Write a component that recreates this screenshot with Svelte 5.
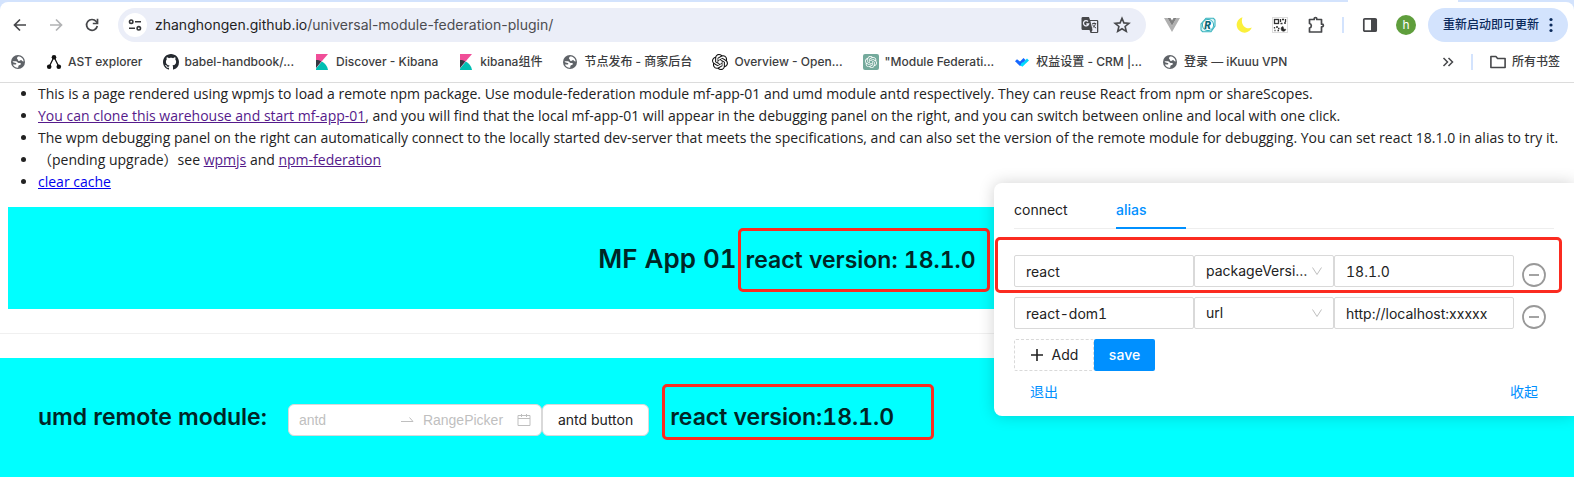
<script>
  const bookmarks = [
    { icon: 'globe', label: '' },
    { icon: 'ast', label: 'AST explorer' },
    { icon: 'github', label: 'babel-handbook/...' },
    { icon: 'kibana', label: 'Discover - Kibana' },
    { icon: 'kibana', label: 'kibana组件' },
    { icon: 'globe', label: '节点发布 - 商家后台' },
    { icon: 'openai', label: 'Overview - Open...' },
    { icon: 'chatgpt', label: '"Module Federati...' },
    { icon: 'check', label: '权益设置 - CRM |...' },
    { icon: 'globe', label: '登录 — iKuuu VPN' }
  ];

  const knot =
    'M22.2819 9.8211a5.9847 5.9847 0 0 0-.5157-4.9108 6.0462 6.0462 0 0 0-6.5098-2.9A6.0651 6.0651 0 0 0 4.9807 4.1818a5.9847 5.9847 0 0 0-3.9977 2.9 6.0462 6.0462 0 0 0 .7427 7.0966 5.98 5.98 0 0 0 .511 4.9107 6.051 6.051 0 0 0 6.5146 2.9001A5.9847 5.9847 0 0 0 13.2599 24a6.0557 6.0557 0 0 0 5.7718-4.2058 5.9894 5.9894 0 0 0 3.9977-2.9001 6.0557 6.0557 0 0 0-.7475-7.0729zm-9.022 12.6081a4.4755 4.4755 0 0 1-2.8764-1.0408l.1419-.0804 4.7783-2.7582a.7948.7948 0 0 0 .3927-.6813v-6.7369l2.02 1.1686a.071.071 0 0 1 .038.052v5.5826a4.504 4.504 0 0 1-4.4945 4.4944zm-9.6607-4.1254a4.4708 4.4708 0 0 1-.5346-3.0137l.142.0852 4.783 2.7582a.7712.7712 0 0 0 .7806 0l5.8428-3.3685v2.3324a.0804.0804 0 0 1-.0332.0615L9.74 19.9502a4.4992 4.4992 0 0 1-6.1408-1.6464zM2.3408 7.8956a4.485 4.485 0 0 1 2.3655-1.9728V11.6a.7664.7664 0 0 0 .3879.6765l5.8144 3.3543-2.0201 1.1685a.0757.0757 0 0 1-.071 0l-4.8303-2.7865A4.504 4.504 0 0 1 2.3408 7.872zm16.5963 3.8558L13.1038 8.364 15.1192 7.2a.0757.0757 0 0 1 .071 0l4.8303 2.7913a4.4944 4.4944 0 0 1-.6765 8.1042v-5.6772a.79.79 0 0 0-.407-.667zm2.0107-3.0231l-.142-.0852-4.7735-2.7818a.7759.7759 0 0 0-.7854 0L9.409 9.2297V6.8974a.0662.0662 0 0 1 .0284-.0615l4.8303-2.7866a4.4992 4.4992 0 0 1 6.6802 4.66zM8.3065 12.863l-2.02-1.1638a.0804.0804 0 0 1-.038-.0567V6.0742a4.4992 4.4992 0 0 1 7.3757-3.4537l-.142.0805L8.704 5.459a.7948.7948 0 0 0-.3927.6813zm1.0976-2.3654l2.602-1.4998 2.6069 1.4998v2.9994l-2.5974 1.4997-2.6067-1.4997Z';

  let rows = $state([
    { name: 'react', kind: 'packageVersion', value: '18.1.0' },
    { name: 'react-dom1', kind: 'url', value: 'http://localhost:xxxxx' }
  ]);

  function addRow() {
    rows.push({ name: '', kind: 'url', value: '' });
  }
  function removeRow(i) {
    rows.splice(i, 1);
  }
</script>

{#snippet siteIcon(name)}
  {#if name === 'globe'}
    <svg width="16" height="16" viewBox="0 0 16 16">
      <circle cx="8" cy="8" r="7" fill="#5f6368" />
      <path d="M2.6 7.2h3.2c1.5 0 1.6 1.7 3 1.7h1.400c.9 0 .9 1.900-.4 2.100-1.300.1-1.500 1.100-1.600 2.700-2.600.2-4.600-1.300-5.300-3.200h2.800c.9 0 .8-1.200 0-1.500C4.500 8.600 2.700 8.700 2.600 7.200z" fill="#fff" />
      <path d="M8 2.400c-.9 1-1.500 2-.6 2.700.7.6.4 1.800 1.500 1.900 1.300.1 1.200-.9 2.100-1 .9 0 .8 1.500 2.700 1.500C13.400 4.300 11 2.300 8 2.400z" fill="#fff" />
    </svg>
  {:else if name === 'ast'}
    <svg width="16" height="16" viewBox="0 0 16 16">
      <path d="M8 3 3 13M8 3l5 10" stroke="#111" stroke-width="1.300" />
      <circle cx="8" cy="3.200" r="2.300" fill="#111" /><circle cx="3.200" cy="12.800" r="2.300" fill="#111" /><circle cx="12.800" cy="12.800" r="2.300" fill="#111" />
    </svg>
  {:else if name === 'github'}
    <svg width="16" height="16" viewBox="0 0 16 16">
      <path fill="#24292f" d="M8 0C3.58 0 0 3.58 0 8c0 3.54 2.29 6.53 5.47 7.59.4.07.55-.17.55-.38 0-.19-.01-.82-.01-1.49-2.01.37-2.53-.49-2.69-.94-.09-.23-.48-.94-.82-1.13-.28-.15-.68-.52-.01-.53.63-.01 1.08.58 1.23.82.72 1.21 1.87.87 2.33.66.07-.52.28-.87.51-1.07-1.78-.2-3.64-.89-3.64-3.95 0-.87.31-1.59.82-2.15-.08-.2-.36-1.02.08-2.12 0 0 .67-.21 2.2.82.64-.18 1.32-.27 2-.27s1.36.09 2 .27c1.53-1.04 2.2-.82 2.2-.82.44 1.1.16 1.92.08 2.12.51.56.82 1.27.82 2.15 0 3.07-1.87 3.75-3.65 3.95.29.25.54.73.54 1.48 0 1.07-.01 1.93-.01 2.2 0 .21.15.46.55.38A8.01 8.01 0 0 0 16 8c0-4.42-3.58-8-8-8z" />
    </svg>
  {:else if name === 'kibana'}
    <svg width="16" height="16" viewBox="0 0 16 16">
      <path d="M2 0h12L2 14z" fill="#f04e98" />
      <path d="M2 6c2 0 3.800.500 5.200 1.300L2 14z" fill="#343741" />
      <path d="M7.800 7.600C11 9.300 13.500 12.300 14 16H2v-1.600z" fill="#00bfb3" />
    </svg>
  {:else if name === 'openai'}
    <svg width="16" height="16" viewBox="0 0 24 24"><path d={knot} fill="#111" /></svg>
  {:else if name === 'chatgpt'}
    <svg width="16" height="16" viewBox="0 0 32 32">
      <rect width="32" height="32" rx="4" fill="#74aa9c" />
      <path d={knot} fill="#fff" transform="translate(4 4)" />
    </svg>
  {:else}
    <svg width="16" height="16" viewBox="0 0 16 16">
      <path d="M8 9.500 13 4.500l2 2-6.500 6-2.500-1z" fill="#00d5fa" />
      <path d="m1 7.200 2-2 3 2.300 3.500-3.500 2 2L6 12z" fill="#1668ff" />
      <path d="m7.200 9.500 1.300-1.300 2 1.800-2 2.500-2-1z" fill="#00e0ff" />
    </svg>
  {/if}
{/snippet}

<div class="page">
  <header>
    <div class="strip"><span class="tab-foot"></span></div>
    <div class="toolbar">
      <button class="tool" aria-label="Back">
        <svg width="16" height="16" viewBox="0 0 16 16" fill="none" stroke="#46474a" stroke-width="1.700"><path d="M14 8H3M8 2.500 2.500 8 8 13.500" /></svg>
      </button>
      <button class="tool" aria-label="Forward">
        <svg width="16" height="16" viewBox="0 0 16 16" fill="none" stroke="#b1b2b4" stroke-width="1.700"><path d="M2 8h11M8 2.500 13.500 8 8 13.500" /></svg>
      </button>
      <button class="tool" aria-label="Reload">
        <svg width="16" height="16" viewBox="0 0 16 16" fill="none" stroke="#46474a" stroke-width="1.700"><path d="M13.300 9A5.400 5.400 0 1 1 12.200 4.500L13.500 6" /><path d="M13.500 1.800V6.500H8.800" /></svg>
      </button>
      <div class="omnibox">
        <button class="chip" aria-label="Site information">
          <svg width="14" height="14" viewBox="0 0 14 14" fill="none" stroke="#36373a" stroke-width="1.600"><circle cx="3.200" cy="3.700" r="1.700" /><path d="M7 3.700h6M1 10.300h6" /><circle cx="10.800" cy="10.300" r="1.700" /></svg>
        </button>
        <div class="address"><b>zhanghongen.github.io</b>/universal-module-federation-plugin/</div>
        <button class="mini" aria-label="Translate">
          <svg width="18" height="18" viewBox="0 0 18 18">
            <path d="M1.500 1h6.500l1 3H16a1.300 1.300 0 0 1 1.300 1.300v10.400A1.300 1.300 0 0 1 16 17H9.500l-1-3h-7A1.300 1.300 0 0 1 .5 12.700V2.300A1.300 1.300 0 0 1 1.500 1z" fill="#46474a" />
            <path d="M9.400 5H16v11h-5.500l1-2z" fill="#ecedf8" />
            <path d="M7 5.500A2.600 2.600 0 1 0 7.600 8H5.300" fill="none" stroke="#ecedf8" stroke-width="1.300" />
            <path d="M11.200 7.500h4M13.200 6.500v1M14.500 7.500c-.4 2-1.500 3.300-2.700 4M11.700 8.500c.5 1.500 1.800 2.700 3.400 3.500" fill="none" stroke="#46474a" stroke-width="1" />
          </svg>
        </button>
        <button class="mini" aria-label="Bookmark this tab">
          <svg width="18" height="18" viewBox="0 0 18 18" fill="none" stroke="#46474a" stroke-width="1.600"><path d="m9 2.300 1.900 4.600 5 .4-3.800 3.200 1.200 4.900L9 12.800l-4.300 2.600 1.200-4.900L2.100 7.300l5-.4z" /></svg>
        </button>
      </div>
      <div class="extensions">
        <button class="tool" aria-label="Vue">
          <svg width="16" height="16" viewBox="0 0 16 16"><path d="M0 1h3.500L8 8.800 12.500 1H16L8 15z" fill="#b0b0b0" /><path d="M3.500 1h3L8 3.600 9.500 1h3L8 8.800z" fill="#808080" /></svg>
        </button>
        <button class="tool" aria-label="React debugger">
          <svg width="16" height="16" viewBox="0 0 16 16"><path d="M6 1.300h7.500L15 3v6l-4 5.700H2.500L1 13V7z" fill="#d9f3f5" stroke="#39b4bf" stroke-width="1.100" /><circle cx="8" cy="8" r="5.600" fill="#fff" stroke="#39b4bf" /><text x="4.200" y="11.600" font-family="Inter, sans-serif" font-size="10" font-weight="800" font-style="italic" fill="#0d6575">R</text></svg>
        </button>
        <button class="tool" aria-label="Dark mode">
          <svg width="16" height="16" viewBox="0 0 16 16"><path d="M6.500.3A7.800 7.800 0 1 0 15.800 10.500C10 13.500 3.800 7.500 6.500.3z" fill="#fbf03c" /></svg>
        </button>
        <button class="tool" aria-label="QR code">
          <svg width="16" height="16" viewBox="0 0 16 16" fill="none" stroke="#333" stroke-width="1.300"><rect x=".500" y=".500" width="15" height="15" stroke="#ddd" stroke-width="1" /><rect x="2.500" y="2.500" width="4" height="4" /><path d="M8.500 2v3M10 2.500h2M13.500 2v3M8.500 6.500h2M12 6h2M2.500 10v1.500M4 10h2M2.500 13.500h1M5.500 13.500h1.500M6 11.500h1.500" /><path d="M11 9.500a2.400 2.400 0 1 0 2.800 2.800h-2z" fill="#222" stroke-width=".600" /></svg>
        </button>
        <button class="tool" aria-label="Extensions">
          <svg width="18" height="18" viewBox="0 0 18 18" fill="none" stroke="#46474a" stroke-width="1.700" stroke-linejoin="round"><path d="M2.500 3.500h4.700v-.7a1.200 1.200 0 0 1 2.600 0v.7h4.700v4.700h.600a1.300 1.300 0 0 1 0 2.600h-.600V16h-12v-4a2.300 2.300 0 0 0 0-4.500z" /></svg>
        </button>
        <span class="divider"></span>
        <button class="tool" aria-label="Side panel">
          <svg width="16" height="16" viewBox="0 0 16 16"><rect x="1.800" y="1.800" width="12.400" height="12.400" rx="1" fill="none" stroke="#46474a" stroke-width="1.700" /><path d="M9 2h5.500v12H9z" fill="#46474a" /></svg>
        </button>
        <button class="tool" aria-label="Profile"><span class="avatar">h</span></button>
      </div>
      <button class="update">
        重新启动即可更新
        <svg width="4" height="16" viewBox="0 0 4 16" fill="#0b2a5c"><circle cx="2" cy="2.500" r="1.600" /><circle cx="2" cy="8" r="1.600" /><circle cx="2" cy="13.500" r="1.600" /></svg>
      </button>
    </div>
    <nav class="bookmarks" aria-label="Bookmarks">
      {#each bookmarks as b}
        <a href="#top" aria-label={b.label || 'Bookmark'}>{@render siteIcon(b.icon)}{#if b.label}<span>{b.label}</span>{/if}</a>
      {/each}
      <div class="overflow">
        <button class="more" aria-label="More bookmarks">
          <svg width="12" height="12" viewBox="0 0 12 12" fill="none" stroke="#46474a" stroke-width="1.500"><path d="m1.500 2 4 4-4 4M6.500 2l4 4-4 4" /></svg>
        </button>
        <span class="rule"></span>
        <a href="#top">
          <svg width="16" height="16" viewBox="0 0 16 16" fill="none" stroke="#46474a" stroke-width="1.600" stroke-linejoin="round"><path d="M.900 2.500h5l1.700 2h7.500v9H.900z" /></svg>
          <span>所有书签</span>
        </a>
      </div>
    </nav>
  </header>

  <main id="top">
    <ul>
      <li>This is a page rendered using wpmjs to load a remote npm package. Use module-federation module mf-app-01 and umd module antd respectively. They can reuse React from npm or shareScopes.</li>
      <li><a class="visited" href="#top">You can clone this warehouse and start mf-app-01</a>, and you will find that the local mf-app-01 will appear in the debugging panel on the right, and you can switch between online and local with one click.</li>
      <li>The wpm debugging panel on the right can automatically connect to the locally started dev-server that meets the specifications, and can also set the version of the remote module for debugging. You can set react 18.1.0 in alias to try it.</li>
      <li>（pending upgrade）see <a class="visited" href="#top">wpmjs</a> and <a class="visited" href="#top">npm-federation</a></li>
      <li><a href="#top">clear cache</a></li>
    </ul>

    <section class="mf">
      <h1>MF App 01</h1>
      <h2 class="marked first">react version: 18.1.0</h2>
    </section>
    <hr />
    <section class="umd">
      <h2>umd remote module:</h2>
      <div class="controls">
        <div class="picker">
          <input aria-label="Start date" placeholder="antd" />
          <svg width="14" height="14" viewBox="0 0 14 14" fill="none" stroke="#bfbfbf"><path d="M0 8.500h12L8.500 4.500" /></svg>
          <input class="end" aria-label="End date" placeholder="RangePicker" />
          <svg width="14" height="14" viewBox="0 0 14 14" fill="none" stroke="#bfbfbf"><path d="M1 2.500h12v10H1zM1 5.500h12M4.500 1v3M9.500 1v3" /></svg>
        </div>
        <button class="antd">antd button</button>
      </div>
      <h2 class="marked second">react version:18.1.0</h2>
    </section>
  </main>

  <aside class="panel">
    <div class="tabs" role="tablist">
      <button role="tab" aria-selected="false">connect</button>
      <button role="tab" aria-selected="true" class="active">alias</button>
    </div>
    <div class="rows">
      {#each rows as row, i}
        <div class="row" class:highlight={i === 0}>
          <input class="field" aria-label="Module" bind:value={row.name} />
          <div class="choice">
            <select class="field" aria-label="Type" bind:value={row.kind}>
              <option>packageVersion</option>
              <option>url</option>
            </select>
            <svg width="12" height="12" viewBox="0 0 12 12" fill="none" stroke="#bfbfbf"><path d="m1.500 2.500 4.500 7 4.500-7" /></svg>
          </div>
          <input class="field" aria-label="Value" bind:value={row.value} />
          <button class="remove" aria-label="Remove" onclick={() => removeRow(i)}>
            <svg width="24" height="24" viewBox="0 0 24 24" fill="none" stroke="#999" stroke-width="1.800"><circle cx="12" cy="12" r="11" /><path d="M7 12h10" /></svg>
          </button>
        </div>
      {/each}
    </div>
    <div class="actions">
      <button class="add" onclick={addRow}>
        <svg width="14" height="14" viewBox="0 0 14 14" stroke="#222" stroke-width="1.600"><path d="M7 1v12M1 7h12" /></svg>
        Add
      </button>
      <button class="save">save</button>
    </div>
    <div class="foot">
      <button>退出</button>
      <button>收起</button>
    </div>
  </aside>
</div>

<style>
  :global(body) {
    background: #fff;
    overflow-x: hidden;
  }
  .page {
    position: relative;
    min-height: 100vh;
    display: flex;
    flex-direction: column;
    overflow: hidden;
    font: 14px/22px Inter, 'Noto Sans CJK SC', sans-serif;
    color: #222;
  }
  button,
  input,
  select {
    font: inherit;
    color: inherit;
    margin: 0;
    box-sizing: border-box;
  }
  button {
    border: 0;
    background: none;
    padding: 0;
    cursor: pointer;
  }
  svg {
    display: block;
    flex: none;
  }

  header {
    background: #d3e3fd;
    border-bottom: 1px solid #dcdcdc;
  }
  .strip {
    height: 2px;
    display: flex;
    justify-content: flex-end;
    padding-right: 116px;
  }
  .tab-foot {
    width: 110px;
    background: #fff;
  }
  .toolbar {
    display: flex;
    align-items: center;
    height: 46px;
    padding: 0 6px 0 2px;
    background: #fff;
    border-radius: 8px 8px 0 0;
  }
  .tool {
    width: 36px;
    height: 34px;
    display: flex;
    align-items: center;
    justify-content: center;
    flex: none;
  }
  .omnibox {
    flex: 1;
    min-width: 0;
    height: 34px;
    display: flex;
    align-items: center;
    gap: 8px;
    margin: 0 8px;
    padding: 0 12px 0 5px;
    box-sizing: border-box;
    border-radius: 17px;
    background: #ebeef8;
  }
  .chip {
    width: 24px;
    height: 24px;
    border-radius: 50%;
    background: #fff;
    display: flex;
    align-items: center;
    justify-content: center;
    flex: none;
  }
  .address {
    flex: 1;
    min-width: 0;
    overflow: hidden;
    white-space: nowrap;
    color: #4b4c50;
  }
  .address b {
    font-weight: 400;
    color: #1f1f1f;
  }
  .mini {
    width: 24px;
    height: 24px;
    display: flex;
    align-items: center;
    justify-content: center;
    flex: none;
  }
  .extensions {
    display: flex;
    align-items: center;
  }
  .divider,
  .rule {
    width: 2px;
    height: 16px;
    background: #d3e3fd;
  }
  .divider {
    margin: 0 8px;
  }
  .avatar {
    width: 20px;
    height: 20px;
    border-radius: 50%;
    background: #5f9e3c;
    color: #fff;
    font-size: 12px;
    line-height: 20px;
    text-align: center;
  }
  .update {
    display: flex;
    align-items: center;
    gap: 10px;
    height: 34px;
    margin-left: 4px;
    padding: 0 15px;
    border-radius: 17px;
    background: #d3e3fd;
    color: #0b2a5c;
    font-size: 12px;
    font-weight: 500;
    white-space: nowrap;
  }
  .bookmarks {
    display: flex;
    align-items: center;
    gap: 20px;
    padding: 3px 14px 9px 10px;
    background: #fff;
    color: #3c3d40;
    font-size: 12px;
    font-weight: 500;
    white-space: nowrap;
  }
  .bookmarks a {
    display: flex;
    align-items: center;
    gap: 6px;
    color: inherit;
    text-decoration: none;
  }
  .overflow {
    display: flex;
    align-items: center;
    gap: 17px;
    margin-left: auto;
  }

  main {
    flex: 1;
    display: flex;
    flex-direction: column;
  }
  ul {
    margin: 0 0 14px;
    padding: 0 0 0 38px;
    font-family: 'Open Sans', 'Noto Sans CJK SC', sans-serif;
  }
  li {
    white-space: nowrap;
  }
  li a {
    color: #0000ee;
    text-decoration: underline;
  }
  li a.visited {
    color: #551a8b;
  }
  h1,
  h2 {
    margin: 0;
    color: #002626;
    font-weight: 600;
    font-variant-numeric: tabular-nums;
    white-space: nowrap;
  }
  h1 {
    font-size: 26px;
    line-height: 38px;
  }
  h2 {
    font-size: 23px;
    line-height: 32px;
  }
  .mf {
    display: flex;
    align-items: baseline;
    justify-content: center;
    gap: 9px;
    margin: 0 8px;
    padding: 33px 0 31px;
    background: #00ffff;
  }
  hr {
    width: 100%;
    height: 1px;
    margin: 24px 0;
    border: 0;
    background: #f0f0f0;
  }
  .umd {
    flex: 1;
    display: flex;
    align-items: flex-start;
    gap: 21px;
    padding: 43px 38px 0;
    background: #00ffff;
  }
  .controls {
    display: flex;
    padding-top: 3px;
  }
  .picker,
  .antd {
    height: 32px;
    box-sizing: border-box;
    border: 1px solid #d9d9d9;
    border-radius: 6px;
    background: #fff;
  }
  .picker {
    width: 254px;
    display: flex;
    align-items: center;
    gap: 8px;
    padding: 0 10px;
    font-family: 'Liberation Sans', sans-serif;
  }
  .picker input {
    flex: 1;
    width: 0;
    min-width: 0;
    padding: 0;
    border: 0;
    outline: 0;
    background: none;
  }
  .picker .end {
    flex: 0 0 86px;
  }
  .picker input::placeholder {
    color: #bfbfbf;
    opacity: 1;
  }
  .antd {
    padding: 0 15px;
    white-space: nowrap;
  }
  .marked {
    position: relative;
  }
  .marked::after,
  .highlight::after {
    content: '';
    position: absolute;
    border: 3px solid #fb2b20;
    border-radius: 5px;
    pointer-events: none;
  }
  .first::after {
    inset: -16px -14px -16px -8px;
  }
  .second::after {
    inset: -17px -40px -7px -8px;
  }

  .panel {
    position: absolute;
    top: 183px;
    right: 0;
    width: 580px;
    box-sizing: border-box;
    padding: 15px 20px 13px;
    border-radius: 8px 0 0 8px;
    background: #fff;
    box-shadow: 0 0 16px rgba(0, 0, 0, 0.18);
    font-variant-numeric: tabular-nums;
  }
  .tabs {
    display: flex;
    gap: 32px;
    height: 30px;
    border-bottom: 1px solid #eee;
  }
  .tabs button {
    width: 70px;
    height: 31px;
    padding-bottom: 6px;
    box-sizing: border-box;
    border-bottom: 2px solid transparent;
    text-align: left;
  }
  .tabs .active {
    border-color: #0090ff;
    color: #0090ff;
    font-weight: 500;
  }
  .rows {
    display: flex;
    flex-direction: column;
    gap: 10px;
    margin-top: 26px;
  }
  .row {
    position: relative;
    display: flex;
    align-items: center;
  }
  .highlight::after {
    inset: -18px -8px -6px -19px;
  }
  .field {
    width: 180px;
    height: 32px;
    padding: 0 11px;
    border: 1px solid #d9d9d9;
    border-radius: 2px;
    background: #fff;
    font-variant-numeric: tabular-nums;
    outline: 0;
  }
  .choice {
    position: relative;
  }
  .choice .field {
    display: block;
    width: 140px;
    padding-right: 23px;
    appearance: none;
    overflow: hidden;
    text-overflow: ellipsis;
    white-space: nowrap;
  }
  .choice svg {
    position: absolute;
    right: 11px;
    top: 10px;
    pointer-events: none;
  }
  .remove {
    margin-left: 8px;
    padding-top: 8px;
    height: 32px;
  }
  .actions {
    display: flex;
    margin-top: 10px;
  }
  .actions button {
    height: 32px;
    border-radius: 2px;
  }
  .add {
    display: flex;
    align-items: center;
    justify-content: center;
    gap: 8px;
    width: 80px;
    border: 1px dashed #d9d9d9;
  }
  .save {
    width: 61px;
    background: #0090ff;
    color: #fff;
    font-weight: 500;
  }
  .foot {
    display: flex;
    justify-content: space-between;
    margin-top: 10px;
    padding: 0 16px;
    color: #0090ff;
  }
</style>
